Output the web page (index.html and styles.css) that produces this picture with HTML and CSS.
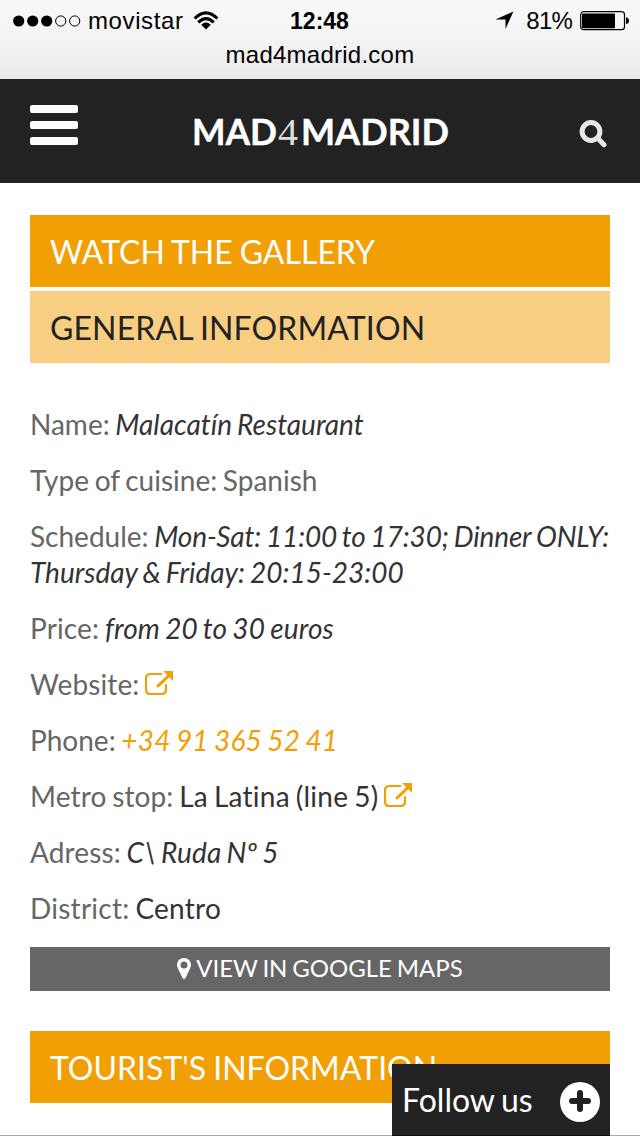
FILE: index.html
```html
<!DOCTYPE html>
<html lang="en">
<head>
<meta charset="utf-8">
<title>Malacatín Restaurant - MAD4MADRID</title>
<link rel="stylesheet" href="styles.css">
</head>
<body>
<div class="screen">
  <div class="browser-bar">
    <div class="status">
      <div class="carrier">
        <svg class="signal" width="68" height="12" viewBox="0 0 68 12"><circle cx="5.7" cy="6" r="5.6"/><circle cx="19.7" cy="6" r="5.6"/><circle cx="33.7" cy="6" r="5.6"/><circle class="ring" cx="47.7" cy="6" r="5.1"/><circle class="ring" cx="61.7" cy="6" r="5.1"/></svg>
        <span class="carrier-name">movistar</span>
        <svg class="wifi" width="26" height="20" viewBox="0 0 26 20"><path class="arc" d="M1.6 7.5Q13-3.8 24.4 7.5M5.3 11.4Q13 3.8 20.7 11.4"/><path d="M8.2 13.8Q13 9.4 17.8 13.8L13 18.6Z"/></svg>
      </div>
      <span class="clock">12:48</span>
      <div class="power">
        <svg class="location" width="19" height="19" viewBox="0 0 19 19"><path d="M18.4.5 10.5 18V8.6H.4Z"/></svg>
        <span class="percent">81%</span>
        <svg class="battery" width="50" height="20" viewBox="0 0 50 20"><rect class="case" x=".7" y=".7" width="43.8" height="18" rx="3"/><rect x="2" y="2.4" width="33" height="14.8" rx="1"/><path d="M46 6.3Q49 7 49 9.700T46 13.100Z"/></svg>
      </div>
    </div>
    <div class="url">mad4madrid.com</div>
  </div>
  <header class="site-header">
    <div class="burger"><i></i><i></i><i></i></div>
    <svg class="logo" width="270" height="60" viewBox="0 0 270 60">
      <text class="logo-bold" x="5" y="43" textLength="85" lengthAdjust="spacingAndGlyphs">MAD</text>
      <text class="logo-four" x="91" y="43" textLength="20" lengthAdjust="spacingAndGlyphs">4</text>
      <text class="logo-bold" x="114" y="43" textLength="148" lengthAdjust="spacingAndGlyphs">MADRID</text>
    </svg>
    <svg class="search" width="28" height="28" viewBox="0 0 28 28"><circle cx="12" cy="11.5" r="8.900"/><path d="M18.500 18 25 24.700"/></svg>
  </header>
  <main class="content">
    <h2 class="section">WATCH THE GALLERY</h2>
    <h2 class="section section-open">GENERAL INFORMATION</h2>
    <div class="details">
      <p>Name: <em>Malacatín Restaurant</em></p>
      <p>Type of cuisine: Spanish</p>
      <p>Schedule: <em><span class="hours">Mon-Sat: 11:00 to 17:30; Dinner ONLY:</span> Thursday &amp; Friday: 20:15-23:00</em></p>
      <p class="wider">Price: <em>from 20 to 30 euros</em></p>
      <p class="wider">Website: <svg class="external" width="28" height="24" viewBox="0 0 28 24"><path class="box" d="M16.3 3H5.5Q1 3 1 7.5v11Q1 23 5.500 23h11Q21 23 21 18.500V14"/><path class="shaft" d="M13 15 24 4.300"/><path d="M18.200 0H28v10Z"/></svg></p>
      <p>Phone: <em class="phone">+34 91 365 52 41</em></p>
      <p class="wider">Metro stop: <span class="value">La Latina (line 5)</span> <svg class="external" width="28" height="24" viewBox="0 0 28 24"><path class="box" d="M16.3 3H5.5Q1 3 1 7.5v11Q1 23 5.500 23h11Q21 23 21 18.500V14"/><path class="shaft" d="M13 15 24 4.300"/><path d="M18.200 0H28v10Z"/></svg></p>
      <p class="wider">Adress: <em>C\ Ruda Nº 5</em></p>
      <p class="district">District: <span class="value">Centro</span></p>
    </div>
    <div class="map-button"><svg class="pin" width="14" height="21" viewBox="0 0 14 21"><path fill-rule="evenodd" d="M7 0C3 0 0 3 0 6.800c0 1.400.3 2.300.8 3.400L5.500 20Q7 22 8.500 20l4.700-9.800c.5-1.100.8-2 .8-3.400C14 3 11 0 7 0Zm0 3.500a3.500 3.500 0 1 1 0 7 3.500 3.500 0 0 1 0-7Z"/></svg><span>VIEW IN GOOGLE MAPS</span></div>
    <h2 class="section">TOURIST'S INFORMATION</h2>
  </main>
  <div class="bottom-line"></div>
  <div class="follow"><span>Follow us</span><svg width="40" height="40" viewBox="0 0 40 40"><circle cx="20" cy="20" r="20"/><path d="M20 11v16M12 19h16"/></svg></div>
</div>
</body>
</html>
```
FILE: styles.css
```css
* { box-sizing: border-box; }
body { margin: 0; background: #fff; font-family: Lato, sans-serif; font-variant-ligatures: none; }
.screen { position: relative; width: 640px; height: 1136px; overflow: hidden; }
.browser-bar { height: 79px; background: linear-gradient(#f8f8f8, #f4f4f4 50%, #e9e9e9); font-family: "Liberation Sans", Arial, sans-serif; font-size: 24px; color: #000; }
.status { display: grid; grid-template-columns: 1fr auto 1fr; height: 41px; align-items: center; padding: 0 10px 0 13px; }
.carrier, .power { display: flex; align-items: center; }
.carrier-name { margin-left: 7px; letter-spacing: .6px; }
.wifi { margin-left: 10px; }
.arc { fill: none; stroke: #000; stroke-width: 3; }
.ring { fill: none; stroke: #000; stroke-width: 1; }
.clock { padding-top: 1px; margin-left: -4px; font-weight: bold; font-size: 23px; }
.power { justify-content: flex-end; }
.percent { margin: 0 8px 0 12px; letter-spacing: -.8px; }
.case { fill: none; stroke: #000; stroke-width: 1.2; }
.url { height: 28px; line-height: 28px; text-align: center; letter-spacing: .25px; }
.site-header { height: 104px; display: flex; justify-content: space-between; background: #222; padding: 0 33px 0 30px; }
.burger { display: flex; flex-direction: column; gap: 8px; width: 48px; margin-top: 26px; }
.burger i { height: 8px; border-radius: 2px; background: #fff; }
.logo { margin: 23px 13px 0 0; }
.logo-bold { font: bold 35.5px Lato, sans-serif; fill: #fff; stroke: #fff; stroke-width: .4; }
.logo-four { font: 38px "Liberation Serif", serif; fill: #ddd; }
.search { margin-top: 41px; fill: none; stroke: #e8e8e8; stroke-width: 5; stroke-linecap: round; }
.content { padding: 32px 30px 0; }
.section { height: 72px; margin: 0 0 4px; padding: 0 20px; background: #f29f05; color: #fff; font-size: 32px; font-weight: 400; line-height: 73px; word-spacing: -1.2px; white-space: nowrap; }
.section-open { background: #f8cf82; color: #222; margin-bottom: 43px; letter-spacing: .12px; }
.details { font-size: 28px; line-height: 36px; color: #666; word-spacing: -1.5px; }
.details p { margin: 0 0 20px; }
.hours { letter-spacing: -.15px; }
.details .wider { letter-spacing: .12px; }
.details .district { margin-bottom: 21px; letter-spacing: .25px; }
.details em, .value { color: #333; }
.details .phone { color: #f29f05; letter-spacing: .2px; }
.wider .value { letter-spacing: .25px; }
.external { fill: #f29f05; vertical-align: 0; }
.box { fill: none; stroke: #f29f05; stroke-width: 2.2; stroke-linecap: round; }
.shaft { fill: none; stroke: #f29f05; stroke-width: 3; stroke-linecap: round; }
.map-button { height: 44px; margin-bottom: 40px; padding-bottom: 2px; display: flex; align-items: center; justify-content: center; gap: 5px; background: #666; color: #fff; font-size: 24px; word-spacing: -1.3px; }
.map-button span { padding-bottom: 2px; }
.pin { fill: #fff; }
.bottom-line { position: absolute; left: 0; bottom: 0; width: 640px; height: 1px; background: #aaa; }
.follow { position: absolute; left: 392px; bottom: 0; width: 218px; height: 72px; padding: 4px 10px 0; display: flex; align-items: center; justify-content: space-between; background: #222; color: #fff; font-size: 32px; word-spacing: -1.5px; border-bottom: 1px solid #111; }
.follow span { padding-bottom: 4px; }
.follow circle { fill: #fff; }
.follow path { fill: none; stroke: #222; stroke-width: 6; stroke-linecap: round; }
```
